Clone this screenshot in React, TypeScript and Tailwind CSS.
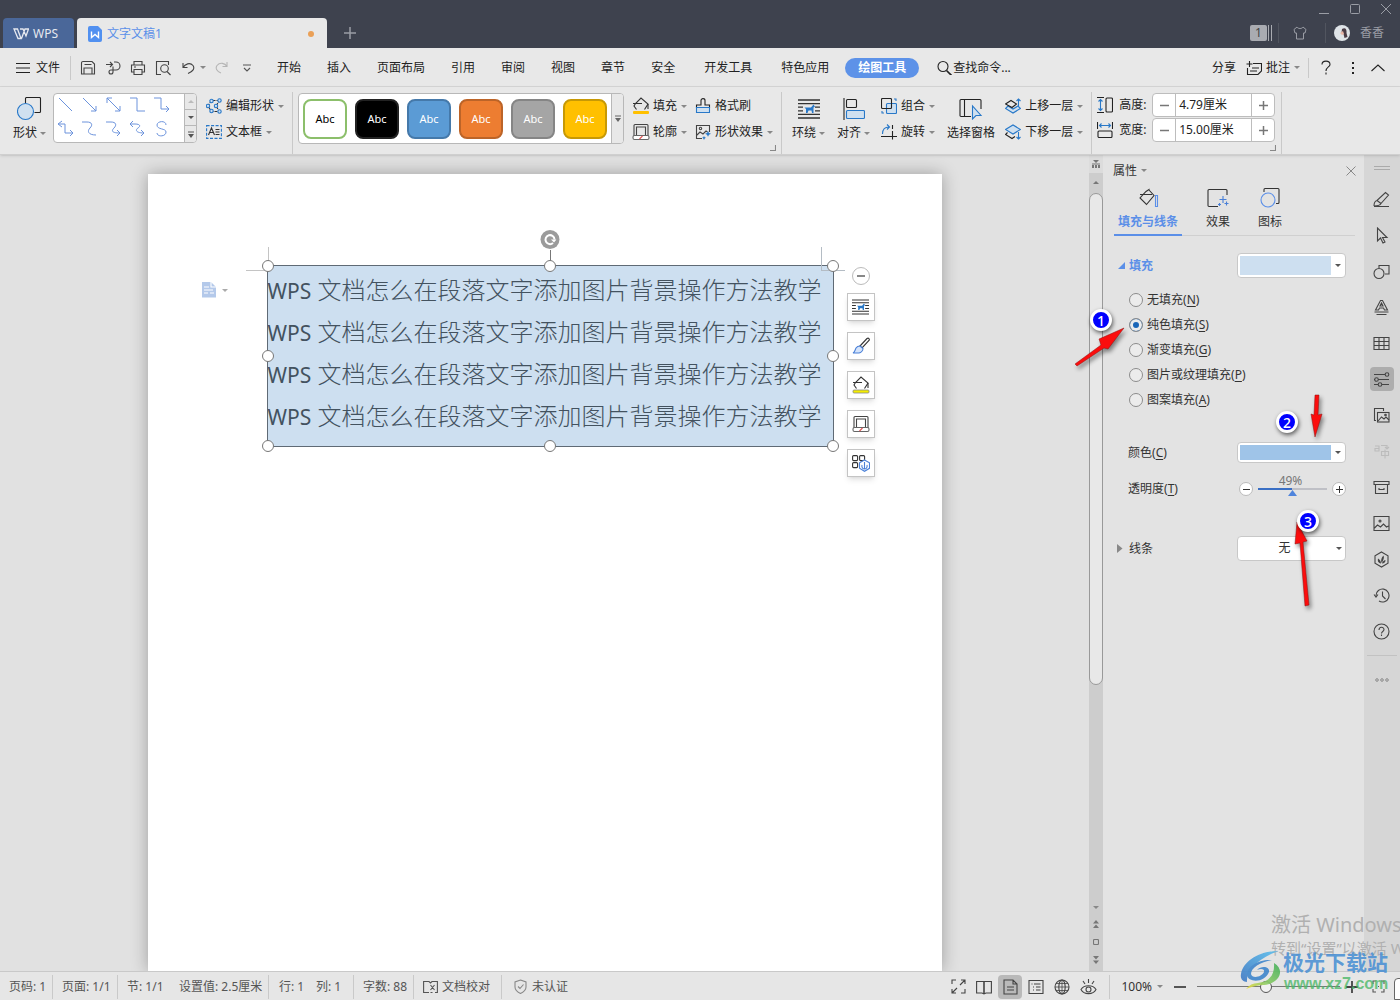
import React from "react";

type P = { children?: React.ReactNode; className?: string };

function Ic({ w = 16, h, children, className = "" }: P & { w?: number; h?: number }) {
  const hh = h ?? w;
  return (
    <svg
      width={w}
      height={hh}
      viewBox={`0 0 ${w} ${hh}`}
      fill="none"
      stroke="currentColor"
      strokeWidth="1.1"
      aria-hidden="true"
      className={`shrink-0 ${className}`}
    >
      {children}
    </svg>
  );
}

const BLUE = "#2878c8";
const SOFT = "#cfe0f0";

function Caret({ className = "text-[#888]" }: P) {
  return (
    <svg width="6" height="3" viewBox="0 0 6 3" aria-hidden="true" className={`shrink-0 ${className}`}>
      <path d="M0 0h6L3 3z" fill="currentColor" />
    </svg>
  );
}

function Sep({ className = "h-6" }: P) {
  return <span className={`w-px shrink-0 bg-[#c9c9c9] ${className}`} />;
}

/* ---------- shared drawings ---------- */

function WrapIcon({ w, h }: { w: number; h: number }) {
  return (
    <svg width={w} height={h} viewBox="0 0 22 20" fill="none" stroke="#333" strokeWidth="1.3" aria-hidden="true">
      <path d="M0 1h22M0 4.6h22M0 8.2h5M0 11.8h5M17 8.2h5M17 11.8h5M0 15.4h22M0 19h22" />
      <path d="M6.500 8.500L8 10v4h1.500l1-2.500h3l.5 2.500h1.500V8.500l1.500-.8-1.500-2.200L13 8.500z" fill={BLUE} stroke="none" />
    </svg>
  );
}

function BucketIcon({ bar, ring = "none" }: { bar: string; ring?: string }) {
  return (
    <Ic w={18} h={18} className="text-[#333]">
      <path d="M4.500 12.500L2 9l1.500-2.500L9 1l7 6-3.500 5.500" />
      <path d="M1 6.500h9M16 7v5" />
      <rect x="1" y="14" width="16" height="3" rx="1" fill={bar} stroke={ring} strokeWidth="0.8" />
    </Ic>
  );
}

function OutlineIcon() {
  return (
    <Ic w={18} h={18} className="text-[#444]">
      <path d="M2 13V2.500a1 1 0 0 1 1-1h12a1 1 0 0 1 1 1V13M4.500 12.500V4h9v8.500" />
      <rect x="1" y="12.500" width="16" height="4" rx="1.500" fill="#fff" stroke="#666" />
      <path d="M7.500 16l3-3" stroke="#e05050" />
    </Ic>
  );
}

/* ---------- title bar ---------- */

function TitleBar() {
  return (
    <header className="flex h-12 shrink-0 items-end bg-[#3e424e] text-[#9a9da5]">
      <button className="ml-[3px] flex h-[30px] w-[71px] items-center rounded-t bg-[#4a6799] pl-2.5 pt-px text-[12px] text-[#e6e9f0]">
        <Ic w={16} h={12} className="mr-1">
          <path d="M1 1h3.500l3.500 9.500H5zM7 1h3l3 7 2.500-7H12L8.500 10.500" strokeWidth="1.300" />
        </Ic>
        WPS
      </button>
      <div className="ml-[3px] flex h-[30px] w-[250px] items-center rounded-t bg-[#e8e8e8] pl-[11px] pr-[13px] pt-px text-[12px] text-[#5b90e8]">
        <Ic w={14} h={16} className="mr-[5px]">
          <path d="M2 0h8l4 4v10a2 2 0 0 1-2 2H2a2 2 0 0 1-2-2V2a2 2 0 0 1 2-2z" fill="#5190f0" stroke="none" />
          <path d="M3.500 5.500v6l3.500-3 3.500 3v-6" stroke="#fff" strokeWidth="1.400" />
        </Ic>
        文字文稿1
        <span className="ml-auto size-1.5 rounded-full bg-[#eaa057]" />
      </div>
      <button aria-label="新建标签" className="mb-[9px] ml-[17px]">
        <Ic w={12}><path d="M6 0v12M0 6h12" strokeWidth="1.500" /></Ic>
      </button>
      <div className="ml-auto flex h-12 flex-col items-end">
        <div className="flex h-[18px] items-center gap-[19px] pr-2">
          <button aria-label="最小化"><Ic w={12} h={12}><path d="M1 10.500h10" strokeWidth="1" /></Ic></button>
          <button aria-label="最大化"><Ic w={12} h={12}><rect x="1.500" y="1.500" width="9" height="9" rx="1" strokeWidth="1" /></Ic></button>
          <button aria-label="关闭"><Ic w={12} h={12}><path d="M1 1l10 10M11 1L1 11" strokeWidth="1" /></Ic></button>
        </div>
        <div className="flex h-[30px] items-center pr-4 text-[12px]">
          <span className="flex h-4 w-[17px] items-center justify-center rounded-xs bg-[#a9abb1] text-[12px] text-[#444]">1</span>
          <span className="ml-px h-4 w-1 border-x border-[#a9abb1]" />
          <span className="ml-1.5 h-5 w-px bg-[#51555f]" />
          <button aria-label="皮肤" className="ml-3.5">
            <Ic w={14} h={14}><path d="M4 1L1 3.500 2 7h1.500v6h7V7H12l1-3.500L10 1C9 3 5 3 4 1z" strokeWidth="1" /></Ic>
          </button>
          <span className="ml-[18px] mr-2 h-5 w-px bg-[#51555f]" />
          <Ic w={16} className="mr-2.5">
            <circle cx="8" cy="8" r="8" fill="#dfe4e8" stroke="none" />
            <path d="M8 4c3-2 5 0 4.500 4l1 4-3 1-1-4-2-1z" fill="#4b3d46" stroke="none" />
            <path d="M6 8l3-2 1 3-2 1z" fill="#e9b8a8" stroke="none" />
          </Ic>
          香香
        </div>
      </div>
    </header>
  );
}

/* ---------- menu row ---------- */

function MenuRow() {
  const near = ["开始", "插入", "页面布局", "引用", "审阅", "视图", "章节", "安全"];
  return (
    <nav className="flex h-[39px] shrink-0 items-center whitespace-nowrap border-b border-[#d6d6d6] bg-[#e8e8e8] pt-px text-[12px] text-[#222]">
      <button className="ml-4 flex items-center gap-1.5">
        <Ic w={14} h={10}><path d="M0 .5h14M0 5h14M0 9.500h14" /></Ic>文件
      </button>
      <Sep className="ml-2.5 h-6" />
      <div className="ml-[9px] flex items-center gap-[9px] text-[#444]">
        <button aria-label="保存">
          <Ic><path d="M3 1.500h9l2.500 2.500v10h-13V3A1.500 1.500 0 0 1 3 1.500zM4 14V8h8v6M4.500 4.500h7" /></Ic>
        </button>
        <button aria-label="输出为PDF">
          <Ic><path d="M1 4.500h6M5 2l2.500 2.500L5 7M9 2h2a3.500 3.500 0 0 1 0 8H6a2 2 0 1 0 2 2V6.500" /></Ic>
        </button>
        <button aria-label="打印">
          <Ic><path d="M4 5V1.500h8V5M4 12H1.500V5h13v7H12M4 9.500h8v5H4zM4 7h2" /></Ic>
        </button>
        <button aria-label="打印预览">
          <Ic><path d="M6 14.500H1.500v-13h12V5" /><circle cx="9.500" cy="8.500" r="3.800" /><path d="M12 11.500l3.500 3.500" /></Ic>
        </button>
      </div>
      <button aria-label="撤销" className="ml-[11px] flex items-center gap-[5px] text-[#444]">
        <Ic w={13} h={13}><path d="M1 2v4.500h4.500M1 6.500C3 3 8 1 11 4.500c2 3 0 6-5 8" /></Ic><Caret />
      </button>
      <button aria-label="恢复" className="ml-[9px] text-[#b5b5b5]">
        <Ic w={13} h={13}><path d="M12 1v4.500H7.500M12 5.500C10 2 5 1 2 4.500c-2 3 0 6 4 7.500" /></Ic>
      </button>
      <button aria-label="自定义快速访问" className="ml-[15px] text-[#555]">
        <Ic w={8} h={8}><path d="M0 1h8M1 4l3 3 3-3" /></Ic>
      </button>
      <div className="ml-[26px] flex gap-[26px]">
        {near.map((t) => (<button key={t}>{t}</button>))}
      </div>
      <div className="ml-[29px] flex gap-[29px]">
        <button>开发工具</button>
        <button>特色应用</button>
      </div>
      <button className="ml-4 h-5 rounded-full bg-[#5d92e8] px-[13px] font-bold text-white">绘图工具</button>
      <button className="ml-[18px] flex items-center gap-px">
        <Ic w={15}><circle cx="6" cy="6.500" r="5" /><path d="M9.500 10.500l5 5" strokeWidth="1.600" /></Ic>
        查找命令...
      </button>
      <div className="ml-auto flex items-center">
        <button>分享</button>
        <button className="ml-2.5 flex items-center gap-1">
          <Ic><path d="M7 3.500h8.500V11L12 14.500H1.500V8M3.500 1v6M.5 4h6M6 8h7M4 11h7" /></Ic>
          批注<Caret />
        </button>
        <Sep className="ml-2 h-5" />
        <button aria-label="帮助" className="ml-3">
          <Ic w={10} h={15}><path d="M1 4.500C1 0 9 0 9 4.500 9 7 5 7 5 11M5 12.500v2" /></Ic>
        </button>
        <button aria-label="更多" className="ml-5">
          <Ic w={4} h={14}><path d="M1 1h2v2H1zM1 6h2v2H1zM1 11h2v2H1z" fill="currentColor" stroke="none" /></Ic>
        </button>
        <button aria-label="收起功能区" className="ml-4 mr-[15px]">
          <Ic w={14} h={8}><path d="M.5 7L7 1l6.500 6" /></Ic>
        </button>
      </div>
    </nav>
  );
}

/* ---------- ribbon ---------- */

function Small({ icon, label, caret = true }: { icon: React.ReactNode; label: string; caret?: boolean }) {
  return (
    <button className="flex h-5 items-center gap-1">
      <span className="flex w-4 justify-center">{icon}</span>
      {label}
      {caret && <Caret />}
    </button>
  );
}

function Big({ icon, label, caret = true }: { icon: React.ReactNode; label: string; caret?: boolean }) {
  return (
    <button className="flex flex-col items-center">
      <span className="flex h-7 items-center">{icon}</span>
      <span className="flex h-5 items-center gap-[3px]">{label}{caret && <Caret />}</span>
    </button>
  );
}

function Col({ children, className = "" }: P) {
  return <div className={`mt-1 flex flex-col gap-1.5 ${className}`}>{children}</div>;
}

const lineShapes = [
  "M2 2l13 13",
  "M2 2l13 13M15 10v5h-5",
  "M2 2l13 13M15 10v5h-5M2 7V2h5",
  "M1 2h7v13h8",
  "M1 2h7v11h8M13 10l3 3-3 3",
  "M5 1L1 4l4 3M1 4h7v9h8M13 10l3 3-3 3",
  "M1 2h5c5 0 6 3 3 6s-2 7 6 7",
  "M1 2h5c5 0 6 3 3 6s-2 5 6 5M12 10l3 3-3 3",
  "M4 1L1 4l3 3M1 4h5c5 0 6 2 3 4s-2 5 6 5M12 10l3 3-3 3",
  "M13 5c0-5-9-4-9 0 0 5 9 3 9 7 0 5-9 5-9 1",
];

const swatches = [
  "bg-white border-[#8cbf6b] text-black",
  "bg-black border-[#222] text-white",
  "bg-[#5b9bd5] border-[#4579aa] text-white",
  "bg-[#ed7d31] border-[#bc6428] text-white",
  "bg-[#a5a5a5] border-[#858585] text-white",
  "bg-[#ffc000] border-[#c79905] text-white",
];

function Launcher({ className = "" }: P) {
  return (
    <button aria-label="对话框启动器" className={`self-end text-[#888] ${className}`}>
      <Ic w={6} h={6}><path d="M5.500 0v5.500H0" /></Ic>
    </button>
  );
}

function SpinBox({ label, value, icon }: { label: string; value: string; icon: React.ReactNode }) {
  return (
    <div className="flex h-6 items-center">
      {icon}
      <label htmlFor={label} className="ml-1.5 w-[33px]">{label}:</label>
      <div className="flex h-6 items-stretch overflow-hidden rounded border border-[#bdbdbd] bg-white">
        <button aria-label={`减小${label}`} className="flex w-[23px] items-center justify-center border-r border-[#bdbdbd] text-[#777]">
          <Ic w={9}><path d="M0 4.500h9" strokeWidth="1.500" /></Ic>
        </button>
        <input id={label} defaultValue={value} className="w-[75px] px-[3px] outline-none" />
        <button aria-label={`增大${label}`} className="flex w-[23px] items-center justify-center border-l border-[#bdbdbd] text-[#777]">
          <Ic w={9}><path d="M0 4.500h9M4.500 0v9" strokeWidth="1.500" /></Ic>
        </button>
      </div>
    </div>
  );
}

function Ribbon() {
  return (
    <section className="relative z-10 flex h-[68px] shrink-0 items-start overflow-hidden whitespace-nowrap border-b border-[#cfcfcf] bg-[#e8e8e8] pt-[5px] text-[12px] text-[#222] shadow-sm">
      <div className="ml-[13px] mt-[3px]">
        <Big
          label="形状"
          icon={
            <Ic w={26} h={24}>
              <path d="M8.500 6V1.500a1 1 0 0 1 1-1h13a1 1 0 0 1 1 1v13a1 1 0 0 1-1 1h-5" />
              <circle cx="8.500" cy="14.500" r="8" fill={SOFT} stroke={BLUE} />
            </Ic>
          }
        />
      </div>
      <div className="ml-[7px] mt-px flex h-[50px] overflow-hidden rounded border border-[#b8b8b8] bg-white">
        <div className="grid grid-cols-5 px-[3px] text-[#6c93dc]">
          {lineShapes.map((d) => (
            <button key={d} aria-label="线条" className="flex h-6 w-6 items-start pt-0.5">
              <Ic w={17}><path d={d} strokeWidth="1" /></Ic>
            </button>
          ))}
        </div>
        <div className="ml-1 flex w-3 flex-col divide-y divide-[#b8b8b8] border-l border-[#b8b8b8] bg-[#e8e8e8]">
          <button aria-label="上一行" className="flex h-4 items-center justify-center"><Caret className="rotate-180 text-[#bbb]" /></button>
          <button aria-label="下一行" className="flex h-4 items-center justify-center"><Caret className="text-[#555]" /></button>
          <button aria-label="展开" className="flex h-4 items-center justify-center text-[#555]">
            <Ic w={6} h={7}><path d="M0 1h6" /><path d="M0 3h6L3 7z" fill="currentColor" stroke="none" /></Ic>
          </button>
        </div>
      </div>
      <Col className="ml-[9px]">
        <Small
          label="编辑形状"
          icon={
            <Ic className="text-[#333]">
              <path d="M13.500 2.500h-8L2 8l3.500 5.500h8L10 8z" strokeDasharray="3 1" />
              <g fill={SOFT} stroke={BLUE}>
                <circle cx="13.500" cy="2.500" r="1.700" /><circle cx="5.500" cy="3" r="1.700" /><circle cx="2" cy="8" r="1.700" />
                <circle cx="5.500" cy="13" r="1.700" /><circle cx="13.500" cy="13.500" r="1.700" /><circle cx="10" cy="8" r="1.700" />
              </g>
            </Ic>
          }
        />
        <Small
          label="文本框"
          icon={
            <Ic className="text-[#333]">
              <rect x=".6" y="1.600" width="14.800" height="12.800" stroke={BLUE} strokeDasharray="3 1.500" />
              <path d="M2.500 11L5.500 4l3 7M3.500 8.500h4M9.500 5.500h4M9.500 8h4M9.500 10.500h4" />
            </Ic>
          }
        />
      </Col>
      <Sep className="ml-2 h-[62px]" />
      <div className="ml-[5px] mt-px flex h-[51px] items-stretch overflow-hidden rounded border border-[#b8b8b8] bg-white">
        <div className="flex items-center gap-2 px-1">
          {swatches.map((s) => (
            <button key={s} className={`h-10 w-11 rounded-lg border-2 pt-px text-[11px] ${s}`}>Abc</button>
          ))}
        </div>
        <button aria-label="更多样式" className="flex w-3 items-center justify-center border-l border-[#b8b8b8] bg-[#e8e8e8] text-[#666]">
          <Ic w={6} h={7}><path d="M0 1h6" /><path d="M0 3h6L3 7z" fill="currentColor" stroke="none" /></Ic>
        </button>
      </div>
      <Col className="ml-[9px]">
        <Small label="填充" icon={<BucketIcon bar="#ffc000" />} />
        <Small label="轮廓" icon={<OutlineIcon />} />
      </Col>
      <Col className="ml-2">
        <Small
          label="格式刷"
          caret={false}
          icon={
            <Ic>
              <path d="M1.500 10V7H6V2.500C6 0 10 0 10 2.500V7h4.500v3" />
              <path d="M1.500 9.500h13v5h-13z" fill={SOFT} stroke={BLUE} />
            </Ic>
          }
        />
        <Small
          label="形状效果"
          icon={
            <Ic className="text-[#444]">
              <path d="M7 14.500H1.500v-13h13V8M2 11l3-3 3 2 3-3 1.500 1" /><circle cx="5.500" cy="4.500" r="1.200" />
              <path d="M13 7l1 2 2 .7-2 1-1 2-1-2-2-1 2-.7zM9 12l.7 1.200 1.300.6-1.300.7L9 16l-.7-1.500-1.300-.7 1.300-.6z" fill={BLUE} stroke="none" />
            </Ic>
          }
        />
      </Col>
      <Launcher className="-ml-[3px] mb-[3px]" />
      <Sep className="ml-[5px] h-[62px]" />
      <div className="ml-2.5 mt-[3px]"><Big label="环绕" icon={<WrapIcon w={22} h={20} />} /></div>
      <div className="ml-3 mt-[3px]">
        <Big
          label="对齐"
          icon={
            <Ic w={22} h={22}>
              <path d="M1 0v22" /><rect x="3.500" y="1.500" width="10" height="8" rx="1" />
              <rect x="3.500" y="12.500" width="18" height="8" rx="1" fill={SOFT} stroke={BLUE} />
            </Ic>
          }
        />
      </div>
      <Col className="ml-[11px]">
        <Small
          label="组合"
          icon={
            <Ic>
              <rect x="5.500" y="5.500" width="10" height="10" rx="1" fill={SOFT} stroke={BLUE} />
              <rect x=".5" y=".5" width="10" height="10" rx="1" />
              <path d="M13 1h2v2M1 13v2h2" stroke={BLUE} />
            </Ic>
          }
        />
        <Small
          label="旋转"
          icon={
            <Ic>
              <path d="M1.500 10C1.500 5 4 3 8 3M6 .5L8.500 3 6 5.500" stroke={BLUE} />
              <path d="M0 12.500h16M11.500 1v4M11.500 7v8.500" />
            </Ic>
          }
        />
      </Col>
      <div className="ml-3 mt-[3px]">
        <Big
          label="选择窗格"
          caret={false}
          icon={
            <Ic w={24} h={22}>
              <path d="M12 18.500H2a1 1 0 0 1-1-1v-15a1 1 0 0 1 1-1h19a1 1 0 0 1 1 1V11M5.500 2v16" />
              <path d="M13.500 8v13l3.500-3.500h5z" fill={SOFT} stroke={BLUE} />
            </Ic>
          }
        />
      </div>
      <Col className="ml-2.5">
        <Small
          label="上移一层"
          icon={
            <Ic>
              <path d="M3 8l-2.500 2.500L8 15l7.500-4.500L13 8l-5 3z" fill={SOFT} stroke={BLUE} />
              <path d="M.5 6L6 2.500l5.500 3.500L7 9.500z" /><path d="M13.500 8V1M11.500 3l2-2 2 2" stroke={BLUE} />
            </Ic>
          }
        />
        <Small
          label="下移一层"
          icon={
            <Ic>
              <path d="M.5 5.500L8 1l7.500 4.500L8 10z" fill={SOFT} stroke={BLUE} />
              <path d="M2.500 8.500L.5 10.500 7 14.500l3-2" /><path d="M13.500 8v7M11.500 13l2 2 2-2" stroke={BLUE} />
            </Ic>
          }
        />
      </Col>
      <Sep className="ml-2 h-[62px]" />
      <div className="ml-[5px] mt-px flex flex-col gap-px">
        <SpinBox
          label="高度"
          value="4.79厘米"
          icon={<Ic><path d="M0 .5h7M0 15.500h7" /><rect x="9" y="1" width="6.500" height="14" rx="1" /><path d="M3.500 2.500v11M1.500 4.500l2-2 2 2M1.500 11.500l2 2 2-2" stroke={BLUE} /></Ic>}
        />
        <SpinBox
          label="宽度"
          value="15.00厘米"
          icon={<Ic><path d="M.5 0v7M15.500 0v7" /><rect x="1" y="9" width="14" height="6.500" rx="1" /><path d="M2.500 3.500h11M4.500 1.500l-2 2 2 2M11.500 1.500l2 2-2 2" stroke={BLUE} /></Ic>}
        />
      </div>
      <Launcher className="-ml-[5px] mb-[3px]" />
      <Sep className="ml-[5px] h-[62px]" />
    </section>
  );
}

/* ---------- document ---------- */

const handles = [
  "left-0 top-0", "left-1/2 top-0", "left-full top-0",
  "left-0 top-1/2", "left-full top-1/2",
  "left-0 top-full", "left-1/2 top-full", "left-full top-full",
];

function FloatBtn({ label, children }: { label: string; children: React.ReactNode }) {
  return (
    <button aria-label={label} className="flex size-7 items-center justify-center border border-[#c4c4c4] bg-white text-[#333] shadow-md">
      {children}
    </button>
  );
}

function DocumentArea() {
  return (
    <main className="min-w-0 flex-1 overflow-hidden bg-[#e1e1e1] pt-[19px]">
      <div className="mx-auto h-full w-[794px] bg-white pl-[119px] pt-[91px] shadow-[0_0_16px_rgba(0,0,0,0.3)]">
        <div className="relative h-[182px] w-[567px] border border-[#5f6a75] bg-[#cddff0]">
          <p className="whitespace-nowrap pt-[3px] text-[24px] font-light leading-[42px] text-[#43525f]">
            {[0, 1, 2, 3].map((i) => (
              <span key={i} className="block h-[42px]"><span className="text-[21px] font-normal">WPS</span> 文档怎么在段落文字添加图片背景操作方法教学</span>
            ))}
          </p>
          <span className="absolute -left-[22px] top-1 h-px w-[22px] bg-[#c4c4c4]" />
          <span className="absolute -top-[19px] left-0 h-[18px] w-px bg-[#c4c4c4]" />
          <span className="absolute -top-[19px] left-[553px] h-6 w-6 border-b border-l border-[#b4bcc4]" />
          <span className="absolute -top-4 left-1/2 h-4 w-px bg-[#777]" />
          {handles.map((h) => (
            <span key={h} className={`absolute size-3 -translate-x-1/2 -translate-y-1/2 rounded-full border border-[#777] bg-white ${h}`} />
          ))}
          <button aria-label="旋转形状" className="absolute -top-9 left-1/2 flex size-[19px] -translate-x-1/2 items-center justify-center rounded-full bg-[#9b9b9b] text-white">
            <Ic w={13} h={13}><path d="M9.500 10A4.500 4.500 0 1 1 11 6.500" strokeWidth="2" /><path d="M7.500 6.500H13l-2.500 3z" fill="currentColor" stroke="none" /></Ic>
          </button>
          <button aria-label="段落布局" className="absolute -left-[66px] top-4 flex items-center gap-1.5">
            <Ic w={14} h={16}>
              <path d="M0 0h9l5 5v10.500H0z" fill="#b4c9ea" stroke="none" />
              <path d="M9 0v5h5M2 5h5M2 8h9M2 11h4M8 11h4" stroke="#fff" />
            </Ic>
            <Caret className="text-[#aaa]" />
          </button>
          <div className="absolute left-[579px] top-px flex flex-col items-center gap-[11px]">
            <button aria-label="收起" className="-mb-[3px] flex size-[18px] items-center justify-center rounded-full border border-[#bbb] bg-white text-[#888]">
              <Ic w={8}><path d="M0 4h8" strokeWidth="2" /></Ic>
            </button>
            <FloatBtn label="环绕"><WrapIcon w={17} h={16} /></FloatBtn>
            <FloatBtn label="样式">
              <Ic w={18} h={18}>
                <path d="M8 9l7-7.500c1.500-1 3 .5 2 2L10 11z" />
                <path d="M8 9l3 2.500c0 2-2 4-4 4.500H1c2-1 2-3 3-5 1-1.500 2.500-2 4-2z" fill="#d5e4fb" stroke="#4a80d8" />
              </Ic>
            </FloatBtn>
            <FloatBtn label="填充颜色"><BucketIcon bar="#f5ee00" ring="#888" /></FloatBtn>
            <FloatBtn label="轮廓颜色"><OutlineIcon /></FloatBtn>
            <FloatBtn label="更多功能">
              <Ic w={18} h={18}>
                <rect x=".6" y="1.600" width="5" height="5" rx="1" /><rect x="7.600" y="1.600" width="5" height="5" rx="1" /><rect x=".6" y="8.600" width="5" height="5" rx="1" />
                <path d="M12.500 6l5 2.800v5.500l-5 3-5-3V8.800z" fill="#fff" stroke="#4a80d8" />
                <path d="M12.500 8v7M12.500 15c-2 0-3-2-2.500-4M12.500 15c2 0 3-2 2.500-4" stroke="#4a80d8" />
              </Ic>
            </FloatBtn>
          </div>
        </div>
      </div>
    </main>
  );
}

function ScrollBar() {
  return (
    <div className="flex w-3.5 shrink-0 flex-col items-center bg-[#cdcdcd] text-[#777]">
      <span className="flex h-[18px] w-full items-center justify-center bg-[#dcdcdc]">
        <Ic w={8} h={9}><path d="M1 0h6L4 3zM0 5h2v3H0zM3 5h2v3H3zM6 5h2v3H6zM0 3.500h8v1H0z" fill="currentColor" stroke="none" /></Ic>
      </span>
      <Caret className="mt-2 rotate-180" />
      <div className="mt-[9px] min-h-0 w-3.5 basis-[492px] rounded-full border border-[#999] bg-[#e8e8e8]" />
      <div className="mb-[7px] mt-auto flex flex-col items-center gap-[11px]">
        <Caret />
        <Ic w={6} h={8}><path d="M0 3.500L3 0l3 3.500zM0 8l3-3.500L6 8z" fill="currentColor" stroke="none" /></Ic>
        <Ic w={6} h={6}><rect x=".5" y=".5" width="5" height="5" rx="1" /></Ic>
        <Ic w={6} h={8}><path d="M0 0h6L3 3.500zM0 4.500h6L3 8z" fill="currentColor" stroke="none" /></Ic>
      </div>
    </div>
  );
}

/* ---------- property panel ---------- */

const fills: [string, string][] = [
  ["无填充", "N"], ["纯色填充", "S"], ["渐变填充", "G"], ["图片或纹理填充", "P"], ["图案填充", "A"],
];

function Key({ k }: { k: string }) {
  return <>(<u className="underline-offset-2">{k}</u>)</>;
}

function ColorCombo({ label, className, swatch }: { label: string; className: string; swatch: string }) {
  return (
    <button aria-label={label} aria-haspopup="listbox" className={`flex w-[109px] items-center rounded border border-[#c8c8c8] bg-white p-0.5 pr-1 ${className}`}>
      <span className={`mr-1 h-full flex-1 ${swatch}`} />
      <Caret className="text-[#555]" />
    </button>
  );
}

function Badge({ n, className }: { n: number; className: string }) {
  return (
    <span className={`absolute flex size-[22px] items-center justify-center rounded-full border-[3px] border-white bg-[#0000fe] text-[14px] font-medium text-white shadow-[1px_2px_4px_rgba(0,0,0,0.6)] ${className}`}>
      {n}
    </span>
  );
}

function PropertyPanel() {
  return (
    <aside className="relative w-[261px] shrink-0 bg-[#e3e3e3] pl-2.5 pr-[18px] text-[12px] text-[#333]">
      <div className="flex h-[31px] items-center">
        <button className="flex items-center gap-1">属性<Caret /></button>
        <button aria-label="关闭面板" className="-mr-[11px] ml-auto text-[#888]"><Ic w={12}><path d="M1.500 1.500l9 9M10.500 1.500l-9 9" strokeWidth="1" /></Ic></button>
      </div>
      <div role="tablist" className="ml-px mr-[-9px] flex h-[50px] border-b border-[#d0d0d0]">
        <button role="tab" aria-selected="true" className="flex h-[50px] w-[68px] flex-col items-center border-b-2 border-[#5b8fe8] pt-px font-bold text-[#5b8fe8]">
          <Ic w={22} h={22} className="mb-1 text-[#333]">
            <path d="M12 3l5 5.500-7.500 9L3 11l6-6.500 3-2zM3 7.500h12" /><path d="M18.500 8.500h2v11h-2z" stroke="#5b8fe8" />
          </Ic>
          填充与线条
        </button>
        <button role="tab" aria-selected="false" className="ml-2.5 flex w-[52px] flex-col items-center pt-px">
          <Ic w={22} h={22} className="mb-1">
            <path d="M11 19.500H2a1 1 0 0 1-1-1V3.500a1 1 0 0 1 1-1h17a1 1 0 0 1 1 1V8" />
            <path d="M16 9v7M12.500 12.500h7M19.500 14.500v4M17.500 16.500h4M12.500 16v3M11 17.500h3" stroke="#4a80d8" />
          </Ic>
          效果
        </button>
        <button role="tab" aria-selected="false" className="flex w-[52px] flex-col items-center pt-px">
          <Ic w={22} h={22} className="mb-1">
            <path d="M5 5V2.500a1 1 0 0 1 1-1h13a1 1 0 0 1 1 1v13a1 1 0 0 1-1 1h-2" /><circle cx="9" cy="13" r="7" stroke="#5b8fe8" />
          </Ic>
          图标
        </button>
      </div>
      <div className="mt-[17px] flex h-[25px] items-center pl-[5px]">
        <Ic w={7} h={7} className="mr-1"><path d="M7 0v7H0z" fill="#5b8fe8" stroke="none" /></Ic>
        <span className="font-bold text-[#5b8fe8]">填充</span>
        <span className="ml-auto"><ColorCombo label="填充预设" className="h-[25px]" swatch="bg-[#cddff0]" /></span>
      </div>
      <fieldset className="mt-[9px] pl-4">
        {fills.map(([t, k]) => (
          <label key={k} className="flex h-[25px] items-center gap-1">
            <input
              type="radio"
              name="fill"
              defaultChecked={k === "S"}
              className="size-3.5 appearance-none rounded-full border border-[#8c8c8c] bg-[#ececec] checked:bg-[#1a66b8] checked:shadow-[inset_0_0_0_3px_#ececec]"
            />
            <span>{t}<Key k={k} /></span>
          </label>
        ))}
      </fieldset>
      <div className="mt-[30px] flex h-[21px] items-center pl-[15px]">
        颜色<Key k="C" />
        <span className="ml-auto"><ColorCombo label="颜色" className="h-[21px]" swatch="bg-[#9fc4e8]" /></span>
      </div>
      <div className="mt-3 flex h-7 items-center pl-[15px]">
        <label htmlFor="opacity">透明度<Key k="T" /></label>
        <button aria-label="减少透明度" className="ml-auto flex size-3.5 items-center justify-center rounded-full border border-[#bbb] bg-white">
          <Ic w={7}><path d="M0 3.500h7" strokeWidth="1" /></Ic>
        </button>
        <div className="relative mx-[5px] h-7 w-[69px]">
          <span className="block pr-1 text-center text-[12px] leading-3 text-[#777]">49%</span>
          <span className="mt-px flex h-0.5 bg-[#bfc0c6]"><span className="w-[49%] bg-[#3a6fc4]" /></span>
          <Ic w={9} h={6} className="mx-auto"><path d="M4.500 0L9 6H0z" fill="#4f84dc" stroke="none" /></Ic>
          <input id="opacity" type="range" defaultValue={49} className="absolute inset-0 w-full opacity-0" />
        </div>
        <button aria-label="增加透明度" className="flex size-3.5 items-center justify-center rounded-full border border-[#bbb] bg-white">
          <Ic w={7}><path d="M0 3.500h7M3.500 0v7" strokeWidth="1" /></Ic>
        </button>
      </div>
      <div className="mt-[33px] flex h-[25px] items-center pl-1">
        <Ic w={6} h={9} className="mr-1.5"><path d="M0 0v9l5.500-4.500z" fill="#888" stroke="none" /></Ic>
        <label htmlFor="line">线条</label>
        <div className="relative ml-auto h-[25px] w-[109px]">
          <select id="line" className="h-full w-full appearance-none rounded border border-[#c8c8c8] bg-white pb-0.5 pr-3.5 text-center [text-align-last:center]">
            <option>无</option>
          </select>
          <Caret className="pointer-events-none absolute right-1 top-[11px] text-[#555]" />
        </div>
      </div>
      <svg width="270" height="300" viewBox="0 0 270 300" aria-hidden="true" className="pointer-events-none absolute -left-8 top-[165px] drop-shadow-[2px_3px_2px_rgba(0,0,0,0.45)]">
        <g fill="#fb0d0d" stroke="#8d1010" strokeWidth="0.5">
          <path d="M4 44L30 25 28 19 53 8 37 29 33 28 6 46z" />
          <path d="M244 75l4 0-1 20 4-1-7 23-4-23 3 1z" />
          <path d="M226 202l10 19-4 1 6 63-4 1-5-63-5 1z" />
        </g>
      </svg>
      <Badge n={1} className="-left-[13px] top-[154px]" />
      <Badge n={2} className="left-[173px] top-64" />
      <Badge n={3} className="left-[194px] top-[355px]" />
    </aside>
  );
}

/* ---------- side rail ---------- */

const rail: { label: string; active?: boolean; dim?: boolean; art: React.ReactNode }[] = [
  { label: "样式", art: <path d="M1 15.500h15M1 15c0-3 1-5 3-5.500L12.500 1.500l3 2.500L8 12.500c-1 2-4 2.500-7 2.500M4 9.500l4 3" /> },
  { label: "选择", art: <path d="M4.500 1v13l3-3 2.500 5 2-1-2.500-4.500h4.500z" /> },
  { label: "形状", art: <><path d="M6 5V2.500h10V11h-4" /><circle cx="6" cy="10.500" r="5" /></> },
  { label: "艺术字", art: <path d="M2.500 11L7.500 1.500h2L14.500 11h-3l-1-2h-4l-1 2zM7 7h3L8.500 4zM1.500 13h14M3.500 15.500h10" /> },
  { label: "表格", art: <path d="M1 2.500h15v12H1zM1 6.500h15M1 10.500h15M6 2.500v12M11 2.500v12" /> },
  { label: "属性", active: true, art: <><path d="M1 3.500h11M5 8.500h11M1 13.500h4M9 13.500h7M1 8.500h1" /><circle cx="14" cy="3.500" r="1.800" /><circle cx="3.500" cy="8.500" r="1.800" /><circle cx="7" cy="13.500" r="1.800" /></> },
  { label: "图片库", art: <><path d="M3 13.500H1.500v-12h9V4" /><rect x="4.500" y="5.500" width="11.500" height="9.500" /><path d="M5 14l3.500-4 2.500 2 2-2 3 3" /><circle cx="12.500" cy="8" r=".8" /></> },
  { label: "翻译", dim: true, art: <path d="M2 3h4v5H2V5.500h4M8 2.500h6v3M12 4l2 2 2-2M8.500 8.500h7v4h-7zM12 6.500v9" /> },
  { label: "归档", art: <path d="M1 2.500h15v3H1zM2.500 5.500h12v9h-12zM6 9v1.500h5V9" /> },
  { label: "图片", art: <><path d="M1 1.500h15v14H1zM1.500 13l3-3 3 2 3-3 3 3 2-1" /><circle cx="7" cy="6" r="1" /></> },
  { label: "推荐", art: <><path d="M8.500 1l6.500 3.700v7.600L8.500 16 2 12.300V4.700z" /><path d="M8 12.500C5 12 4.500 10 5 7.500c2 1 3 3 3 5zM8.500 12c-1-3 0-5.500 2-7.500 1 2 0 5-2 7.500zM9 12.500c0-1.500 1.500-3 3.500-3.500 0 2-1 3.500-3.500 3.500" fill="currentColor" stroke="none" /></> },
  { label: "历史", art: <path d="M3 8.500A6.500 6.500 0 1 1 6 14M1 7.500l2 2.500 2-2.500M9.500 4.500V9l3 3" /> },
  { label: "帮助", art: <><circle cx="8.500" cy="8.500" r="7.500" /><path d="M6 7c0-3.500 5-3.500 5-.5 0 2-2.500 2-2.500 4M8.500 11.500V13" /></> },
];

function SideRail() {
  return (
    <aside className="flex w-9 shrink-0 flex-col items-center bg-[#d6d6d6] pr-px pt-[11px] text-[#444]">
      <Ic w={16} h={4} className="text-[#aaa]"><path d="M0 .5h16M0 3.500h16" /></Ic>
      <div className="mt-[17px] flex flex-col gap-3">
        {rail.map((r) => (
          <button
            key={r.label}
            aria-label={r.label}
            className={`flex size-6 items-center justify-center rounded ${r.active ? "bg-[#adadad]" : ""} ${r.dim ? "text-[#bcbcbc]" : ""}`}
          >
            <Ic w={17}>{r.art}</Ic>
          </button>
        ))}
      </div>
      <span className="mt-3 h-px w-[30px] bg-[#c2c2c2]" />
      <button aria-label="更多工具" className="mt-[22px] text-[#777]">
        <Ic w={14} h={4}><g strokeWidth="0.8"><circle cx="2" cy="2" r="1.300" /><circle cx="7" cy="2" r="1.300" /><circle cx="12" cy="2" r="1.300" /></g></Ic>
      </button>
    </aside>
  );
}

/* ---------- status bar ---------- */

function StatusBar() {
  return (
    <footer className="flex h-[29px] shrink-0 items-center whitespace-nowrap border-t border-[#c9c9c9] bg-[#e6e6e6] pt-px text-[12px] text-[#555]">
      <span className="ml-[9px] w-[43px]">页码: 1</span><Sep />
      <span className="ml-[9px] w-[55px]">页面: 1/1</span><Sep />
      <span className="ml-[9px] w-[52px]">节: 1/1</span>
      <span className="w-[89px]">设置值: 2.5厘米</span><Sep />
      <span className="ml-2.5 w-[37px]">行: 1</span>
      <span className="w-[37px]">列: 1</span><Sep />
      <span className="ml-[9px] w-[50px]">字数: 88</span><Sep />
      <button className="ml-[9px] flex w-[78px] items-center gap-1">
        <Ic w={15} h={14}><path d="M6 12.500H.6v-11H6l1.500 1.500L9 1.500h5.400v11H12M7.500 12.500h2M7.500 5l4 5M11.500 5l-4 5" /></Ic>文档校对
      </button><Sep />
      <button className="ml-3 flex items-center gap-[5px]">
        <Ic w={13} h={15} className="text-[#888]"><path d="M6.500 1l5.500 2v5c0 3-2.500 5-5.500 6.500C3.500 13 1 11 1 8V3zM4 7.500l2 2 3.500-4" /></Ic>未认证
      </button>
      <div className="ml-auto flex items-center gap-0.5 text-[#444]">
        <button aria-label="全屏" className="flex size-6 items-center justify-center"><Ic w={15}><path d="M1 5V1h4M14 10v4h-4M9 6l5-5M10 1h4v4M6 9l-5 5M5 14H1v-4" /></Ic></button>
        <button aria-label="阅读版式" className="flex size-6 items-center justify-center"><Ic w={16}><path d="M8 2.500H.6v11.500H6l2 1 2-1h5.400V2.500zV15" /><path d="M8 2.500V15" /></Ic></button>
        <button aria-label="页面视图" className="flex size-6 items-center justify-center rounded bg-[#b9b9b9]"><Ic w={15} h={16}><path d="M1 1h9l4 4v10H1zM10 1v4h4M4 8h7M4 11h7" /></Ic></button>
        <button aria-label="大纲" className="flex size-6 items-center justify-center"><Ic w={16}><path d="M1 1.500h14v13H1zM3.500 5h1M6 5h6.500M5 8h1M8 8h4.500M5 11h1M8 11h4.500" /></Ic></button>
        <button aria-label="Web版式" className="flex size-6 items-center justify-center"><Ic w={16}><circle cx="8" cy="8" r="7" /><ellipse cx="8" cy="8" rx="3.200" ry="7" /><path d="M1 8h14M8 1v14M2 4.500h12M2 11.500h12" strokeWidth="0.8" /></Ic></button>
        <button aria-label="护眼模式" className="flex size-6 items-center justify-center"><Ic w={17} h={16}><path d="M1 10.500c3-5 12-5 15 0-3 5.500-12 5.500-15 0zM8.500 0v4M3 2l2 3M14 2l-2 3" /><circle cx="8.500" cy="10.500" r="2.500" /></Ic></button>
      </div>
      <Sep className="ml-[9px] h-6" />
      <button className="ml-[11px] flex items-center gap-[5px] text-[#333]">100%<Caret /></button>
      <button aria-label="缩小" className="ml-[11px] text-[#444]"><Ic w={12}><path d="M0 6h12" strokeWidth="1.800" /></Ic></button>
      <div className="relative ml-[11px] flex h-4 w-[143px] items-center">
        <span className="h-px w-full bg-[#777]" />
        <span className="absolute left-[63px] size-3 rounded-full border border-[#555] bg-[#f2f2f2]" />
        <input aria-label="缩放" type="range" defaultValue={48} className="absolute inset-0 w-full opacity-0" />
      </div>
      <button aria-label="放大" className="ml-1.5 text-[#444]"><Ic w={12}><path d="M0 6h12M6 0v12" strokeWidth="1.800" /></Ic></button>
      <button aria-label="适应页面" className="ml-3.5 mr-[15px]"><Ic w={13}><path d="M1 4V1h3M9 1h3v3M12 9v3H9M4 12H1V9M6 6.500h1" /></Ic></button>
    </footer>
  );
}

function Watermarks() {
  return (
    <div aria-hidden="true" className="pointer-events-none absolute bottom-0 right-0 z-20 h-[90px] w-[162px] overflow-hidden whitespace-nowrap">
      <div className="pl-[33px] text-[#b0b0b0]">
        <div className="text-[20px] leading-[30px]">激活 Windows</div>
        <div className="text-[15px] leading-4">转到“设置”以激活 Windows。</div>
      </div>
      <svg width="42" height="42" viewBox="0 0 42 42" className="absolute left-[2px] top-10 opacity-90">
        <defs>
          <linearGradient id="swooshBlue" x1="1" y1="0" x2="0" y2="1">
            <stop offset="0" stopColor="#5cc0ee" /><stop offset="1" stopColor="#3d78c4" />
          </linearGradient>
          <linearGradient id="swooshGreen" x1="1" y1="0" x2="0" y2="1">
            <stop offset="0" stopColor="#3fae5a" /><stop offset="0.600" stopColor="#8fcc66" /><stop offset="1" stopColor="#f0dc3c" />
          </linearGradient>
        </defs>
        <path d="M38 1C20 1 3 11 1 24c-1 5 2 8 6 8-1-9 8-22 31-31z" fill="url(#swooshBlue)" />
        <path d="M32 10C18 9 7 17 7 25c1 8 18 8 22-3 1-5-7-7-12-2 4-2 8-1 7 2-2 5-12 7-13 2 0-6 9-12 21-14z" fill="#3f86cc" />
        <path d="M34 13c12 7 5 21-10 22-6 0-13 2-18 4 3-4 7-6 12-6 10-1 17-7 16-20z" fill="url(#swooshGreen)" />
      </svg>
      <div className="absolute left-[45px] top-10 text-[21px] font-bold leading-6 text-[#4a90d4]/90">极光下载站</div>
      <div className="absolute left-[46px] top-16 text-[16px] font-bold leading-5 text-[#4cb868]/80 [font-family:'Liberation_Sans',sans-serif]">www.xz7.com</div>
      <span className="absolute -right-2 bottom-0 h-[22px] w-3.5 rounded-tl border border-[#666] bg-white" />
    </div>
  );
}

export default function App() {
  return (
    <div className="relative flex h-screen flex-col overflow-hidden bg-[#e1e1e1] [font-family:'Noto_Sans','Noto_Sans_CJK_SC',sans-serif]">
      <TitleBar />
      <MenuRow />
      <Ribbon />
      <div className="flex min-h-0 flex-1">
        <DocumentArea />
        <ScrollBar />
        <PropertyPanel />
        <SideRail />
      </div>
      <StatusBar />
      <Watermarks />
    </div>
  );
}
